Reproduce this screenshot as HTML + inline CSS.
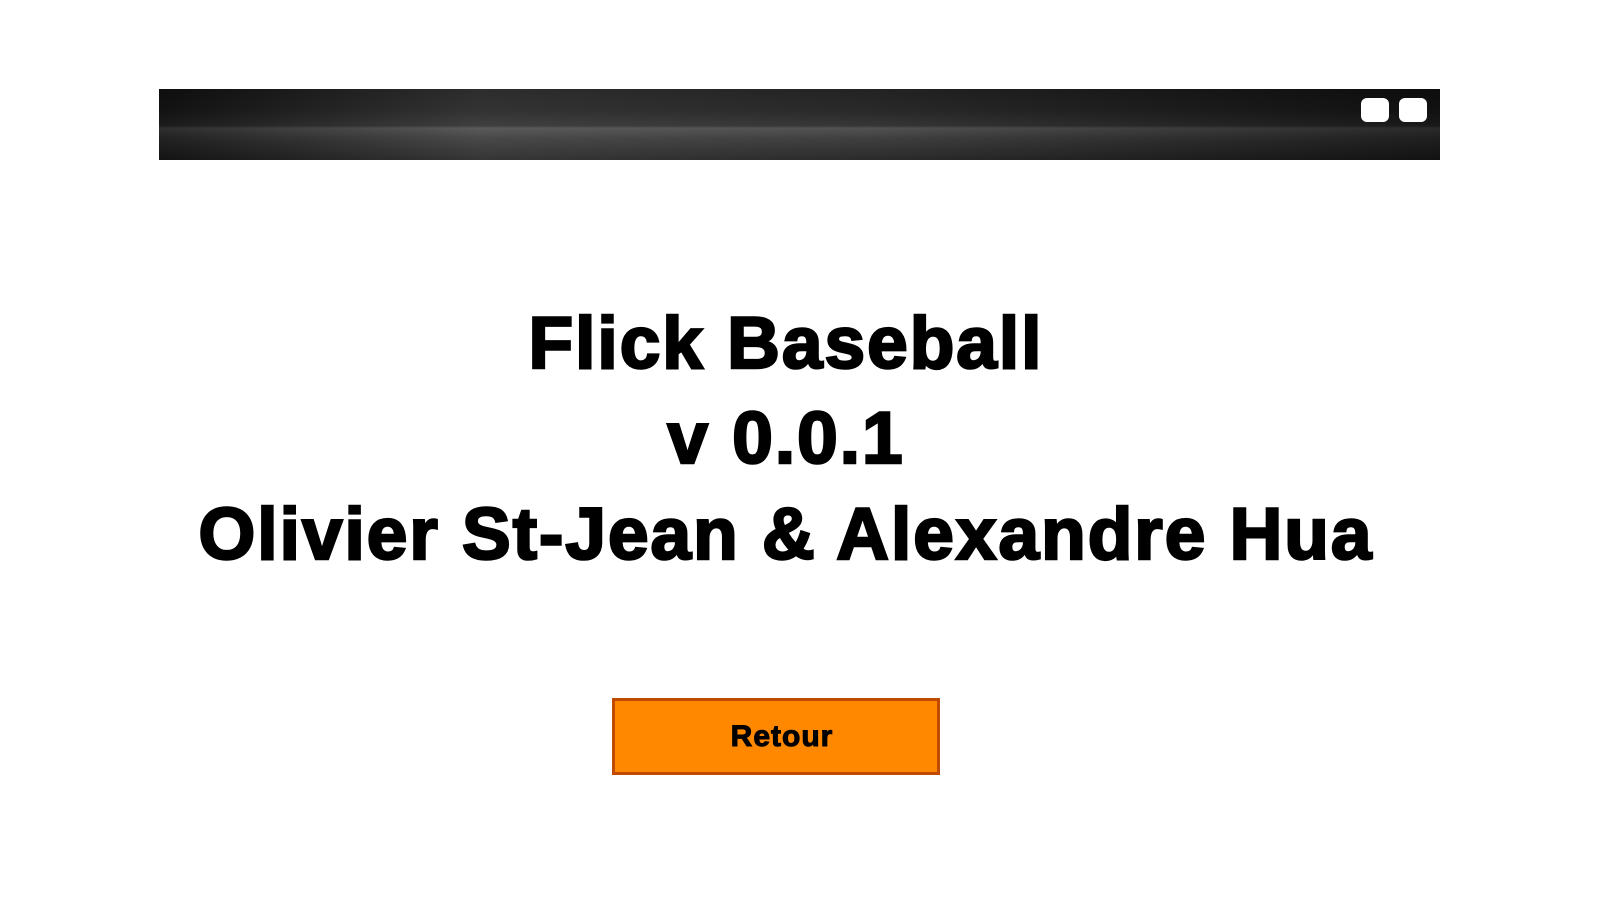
<!DOCTYPE html>
<html><head><style>
body{margin:0;width:1600px;height:900px;background:#fff;position:relative;overflow:hidden;font-family:"Liberation Sans",Arial,sans-serif}
.bar{position:absolute;left:159px;top:89px;width:1281px;height:71px;background:linear-gradient(180deg,#151515 0%,#1c1c1c 30%,#2a2a2a 52%,#474747 55%,#333 70%,#1e1e1e 100%)}
.bar:after{content:"";position:absolute;left:0;right:0;top:0;bottom:0;background:linear-gradient(90deg,rgba(0,0,0,.35),rgba(255,255,255,.1) 25%,rgba(255,255,255,.06) 55%,rgba(0,0,0,.4))}
.btnw{position:absolute;top:9px;width:28px;height:24px;background:#fff;border-radius:6px;z-index:2}
.t{position:absolute;left:0;width:1572px;text-align:center;font-weight:bold;font-size:73px;color:#000;-webkit-text-stroke:2.5px #000;letter-spacing:2px;white-space:nowrap}
.b{position:absolute;left:612px;top:698px;width:322px;height:71px;background:#ff8800;border:3px solid #c04a00;text-align:center;font-weight:bold;font-size:30px;line-height:71px;-webkit-text-stroke:1px #000;letter-spacing:1px;box-sizing:content-box;padding-left:0}
.b span{position:relative;left:6px}
</style></head><body>
<div class="bar"><div class="btnw" style="left:1202px"></div><div class="btnw" style="left:1240px"></div></div>
<div class="t" style="top:302px">Flick Baseball</div>
<div class="t" style="top:397px">v 0.0.1</div>
<div class="t" style="top:493px">Olivier St-Jean &amp; Alexandre Hua</div>
<div class="b"><span>Retour</span></div>
</body></html>
